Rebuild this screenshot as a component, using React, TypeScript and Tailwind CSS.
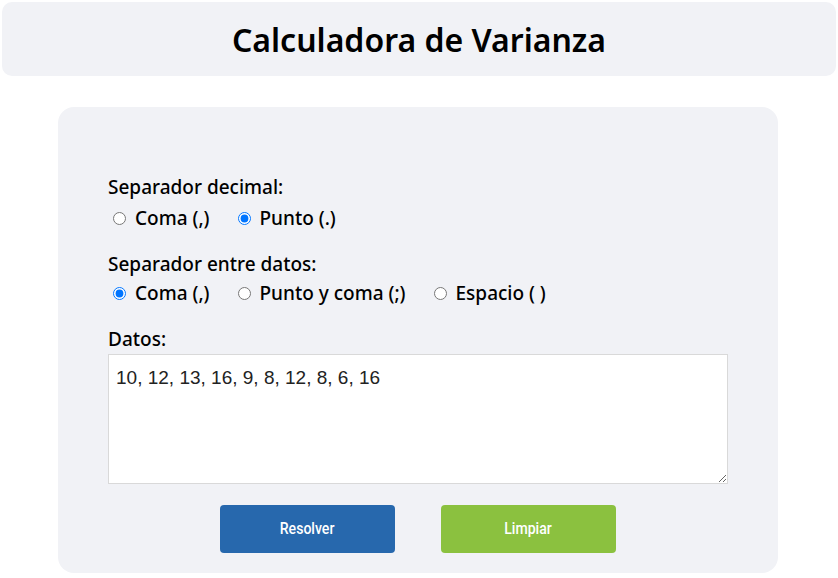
import React, { useState } from 'react';

const decimalOptions = [
  { id: 'coma', label: 'Coma (,)' },
  { id: 'punto', label: 'Punto (.)' },
];

const dataOptions = [
  { id: 'coma', label: 'Coma (,)' },
  { id: 'puntoycoma', label: 'Punto y coma (;)' },
  { id: 'espacio', label: 'Espacio ( )' },
];

type RadioRowProps = {
  name: string;
  options: { id: string; label: string }[];
  value: string;
  onChange: (v: string) => void;
};

const RadioRow: React.FC<RadioRowProps> = ({ name, options, value, onChange }) => {
  return (
    <div className="flex items-center gap-[28px] ml-[5px] h-6">
      {options.map((o) => (
        <label key={o.id} className="flex items-center gap-[9px] cursor-pointer">
          <input
            type="radio"
            name={name}
            checked={value === o.id}
            onChange={() => onChange(o.id)}
            className="w-[13px] h-[13px]"
          />
          <span>{o.label}</span>
        </label>
      ))}
    </div>
  );
};

export default function App() {
  const [decimal, setDecimal] = useState('punto');
  const [sep, setSep] = useState('coma');
  const [datos, setDatos] = useState('10, 12, 13, 16, 9, 8, 12, 8, 6, 16');

  return (
    <div className="w-[838px] min-h-[578px] bg-white pt-[2px] font-['Noto_Sans',sans-serif] text-black">
      <header className="mx-[2px] h-[74px] rounded-[10px] bg-[#f1f2f6] flex items-center justify-center">
        <h1 className="text-[32px] font-semibold leading-none pt-[1px]">Calculadora de Varianza</h1>
      </header>

      <main className="mt-[31px] ml-[58px] w-[720px] rounded-[16px] bg-[#f1f2f6] px-[50px] pt-[68px] pb-[20px] text-[19px] font-medium">
        <div className="leading-6">Separador decimal:</div>
        <div className="mt-[7px]">
          <RadioRow name="decimal" options={decimalOptions} value={decimal} onChange={setDecimal} />
        </div>

        <div className="leading-6 mt-[22px]">Separador entre datos:</div>
        <div className="mt-[5px]">
          <RadioRow name="sep" options={dataOptions} value={sep} onChange={setSep} />
        </div>

        <div className="leading-6 mt-[22px]">Datos:</div>
        <textarea
          value={datos}
          onChange={(e) => setDatos(e.target.value)}
          className="mt-[3px] block w-full h-[130px] bg-white border border-[#d9d9d9] px-[7px] py-[9px] font-['Liberation_Sans',Arial,sans-serif] font-normal text-[19px] leading-[1.5] text-[#222] outline-none resize-y"
        />

        <div className="mt-[21px] flex justify-center gap-[46px]">
          <button className="w-[175px] h-[48px] rounded-[4px] bg-[#2768ad] text-white font-['Roboto',sans-serif] text-[16px] font-medium">
            <span className="inline-block scale-x-[0.88]">Resolver</span>
          </button>
          <button className="w-[175px] h-[48px] rounded-[4px] bg-[#8bc13f] text-white font-['Roboto',sans-serif] text-[16px] font-medium">
            <span className="inline-block scale-x-[0.88]">Limpiar</span>
          </button>
        </div>
      </main>
    </div>
  );
}
